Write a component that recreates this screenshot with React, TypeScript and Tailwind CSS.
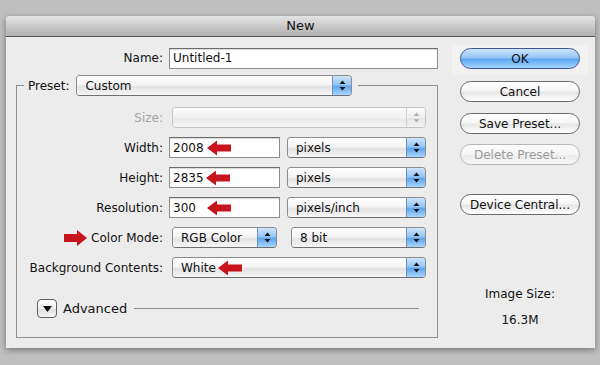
import React from "react"

const font = "font-['DejaVu_Sans',_'Liberation_Sans',_sans-serif]"

function UpDown({ disabled }: { disabled?: boolean }) {
  const c = disabled ? "#b0b0b0" : "#111"
  return (
    <svg width="7" height="11" viewBox="0 0 7 11">
      <path d="M3.5 0.5 L6.5 4 L0.5 4 Z" fill={c} />
      <path d="M0.5 7 L6.5 7 L3.5 10.5 Z" fill={c} />
    </svg>
  )
}

function Popup({ value, className, disabled }: { value: string; className: string; disabled?: boolean }) {
  return (
    <div
      className={`flex h-[21px] overflow-hidden rounded-[4px] border ${
        disabled ? "border-[#c4c4c4]" : "border-[#8c8c8c] border-b-[#6f6f6f]"
      } ${className}`}
    >
      <div
        className={`flex flex-1 items-center pl-[8px] ${
          disabled
            ? "bg-[linear-gradient(#fbfbfb,#f1f1f1_50%,#e9e9e9_55%,#f4f4f4)] text-[#a0a0a0]"
            : "bg-[linear-gradient(#ffffff,#f4f4f4_45%,#e2e2e2_58%,#f7f7f7)] text-[#111]"
        }`}
      >
        {value}
      </div>
      <div
        className={`flex w-[19px] items-center justify-center border-l ${
          disabled
            ? "border-[#d2d2d2] bg-[linear-gradient(#fbfbfb,#efefef_50%,#e6e6e6_55%,#f3f3f3)]"
            : "border-[#6f8fbf] bg-[linear-gradient(#cfe5fb,#94c6f6_45%,#5fa6ee_56%,#a9d7fd)]"
        }`}
      >
        <UpDown disabled={disabled} />
      </div>
    </div>
  )
}

function RedArrow({ left }: { left: string }) {
  return (
    <svg className={`absolute top-1/2 -translate-y-1/2 ${left}`} width="24" height="15" viewBox="0 0 24 15">
      <path d="M0 7.5 L10 0 L10 4 L24 4 L24 11 L10 11 L10 15 Z" fill="#c8141c" />
    </svg>
  )
}

function TextField({ value, className, arrow }: { value: string; className: string; arrow?: string }) {
  return (
    <div
      className={`relative flex h-[21px] items-center border border-[#8e8e8e] border-t-[#6c6c6c] bg-white pl-[3px] text-[#111] shadow-[inset_0_1px_1px_rgba(0,0,0,0.15)] ${className}`}
    >
      {value}
      {arrow && <RedArrow left={arrow} />}
    </div>
  )
}

function Button({ label, primary, disabled }: { label: string; primary?: boolean; disabled?: boolean }) {
  let look = "border-[#6a6a6a] bg-[linear-gradient(#ffffff,#f6f6f6_45%,#e6e6e6_55%,#ffffff)] text-[#111]"
  if (primary) look = "border-[#3b5793] bg-[linear-gradient(#cde5fc,#93c6f6_45%,#5ea6f0_55%,#a4d7fe)] text-[#111]"
  if (disabled) look = "border-[#b6b6b6] bg-[linear-gradient(#fdfdfd,#f4f4f4_50%,#ececec_55%,#f8f8f8)] text-[#9b9b9b]"
  return (
    <div className={`flex h-[21px] w-[120px] items-center justify-center rounded-full border ${look}`}>
      {label}
    </div>
  )
}

function Row({ label, disabled, children, pre }: { label: string; disabled?: boolean; children: React.ReactNode; pre?: React.ReactNode }) {
  return (
    <div className="flex h-[21px] items-center">
      <div className={`flex w-[146px] items-center justify-end gap-[4px] ${disabled ? "text-[#a3a3a3]" : "text-[#111]"}`}>
        {pre}
        {label}:
      </div>
      {children}
    </div>
  )
}

export default function App() {
  return (
    <div className={`h-[365px] w-[600px] bg-[#bfbfbf] px-[6px] pt-[16px] text-[12px] ${font}`}>
      <div className="h-[332px] w-[589px] overflow-hidden rounded-t-[4px] bg-[#ececec] shadow-[0_2px_6px_rgba(0,0,0,0.4)]">
        {/* title bar */}
        <div className="flex h-[21px] items-center justify-center border-b border-[#555] bg-[linear-gradient(#e4e4e4,#b0b0b0)] text-[13px] text-[#111]">
          New
        </div>

        <div className="flex">
          {/* left side */}
          <div className="ml-[10px] w-[422px] pt-[11px]">
            <div className="flex h-[20px] items-center">
              <div className="w-[147px] text-right text-[#111]">Name:</div>
              <TextField value="Untitled-1" className="ml-[6px] h-[20px] w-[269px]" />
            </div>

            <fieldset className="mt-[7px] h-[263px] border border-[#8f8f8f]">
              <legend className="ml-[7px] flex items-center pl-[4px] pr-[6px] text-[#111]">
                Preset:
                <Popup value="Custom" className="ml-[7px] h-[20px] w-[276px]" />
              </legend>

              <div className="flex flex-col gap-[9px] pt-[11px]">
                <Row label="Size" disabled>
                  <Popup value="" disabled className="ml-[9px] h-[20px] w-[254px]" />
                </Row>
                <Row label="Width">
                  <TextField value="2008" className="ml-[6px] w-[111px]" arrow="left-[37px]" />
                  <Popup value="pixels" className="ml-[7px] w-[139px]" />
                </Row>
                <Row label="Height">
                  <TextField value="2835" className="ml-[6px] w-[111px]" arrow="left-[36px]" />
                  <Popup value="pixels" className="ml-[7px] w-[139px]" />
                </Row>
                <Row label="Resolution">
                  <TextField value="300" className="ml-[6px] w-[111px]" arrow="left-[37px]" />
                  <Popup value="pixels/inch" className="ml-[7px] w-[139px]" />
                </Row>
                <Row
                  label="Color Mode"
                  pre={
                    <svg width="23" height="16" viewBox="0 0 23 16">
                      <path d="M23 8 L13 0 L13 4 L0 4 L0 12 L13 12 L13 16 Z" fill="#c8141c" />
                    </svg>
                  }
                >
                  <Popup value="RGB Color" className="ml-[9px] w-[105px]" />
                  <Popup value="8 bit" className="ml-[14px] w-[135px]" />
                </Row>
                <Row label="Background Contents">
                  <div className="relative ml-[9px] w-[254px]">
                    <Popup value="White" className="w-full" />
                    <RedArrow left="left-[46px]" />
                  </div>
                </Row>
              </div>

              <div className="mr-[18px] mt-[21px] flex h-[19px] items-center pl-[20px]">
                <div className="flex h-[19px] w-[20px] items-center justify-center rounded-[4px] border border-[#5f5f5f] bg-[linear-gradient(#ffffff,#f0f0f0_50%,#dedede_55%,#f6f6f6)]">
                  <svg width="9" height="6" viewBox="0 0 9 6">
                    <path d="M0 0 L9 0 L4.5 6 Z" fill="#111" />
                  </svg>
                </div>
                <span className="ml-[6px] text-[13px] text-[#111]">Advanced</span>
                <div className="ml-[7px] h-px flex-1 bg-[#8f8f8f]" />
              </div>
            </fieldset>
          </div>

          {/* right side */}
          <div className="ml-[14px] flex w-[136px] flex-col items-center pt-[8px]">
            <div className="flex w-full justify-center bg-[#f1f1f1] pb-[5px] pt-[3px]">
              <Button label="OK" primary />
            </div>
            <div className="mt-[7px]">
              <Button label="Cancel" />
            </div>
            <div className="mt-[11px]">
              <Button label="Save Preset..." />
            </div>
            <div className="mt-[10px]">
              <Button label="Delete Preset..." disabled />
            </div>
            <div className="mt-[29px]">
              <Button label="Device Central..." />
            </div>
            <div className="mt-[70px] text-[#111]">Image Size:</div>
            <div className="mt-[8px] text-[#111]">16.3M</div>
          </div>
        </div>
      </div>
    </div>
  )
}
